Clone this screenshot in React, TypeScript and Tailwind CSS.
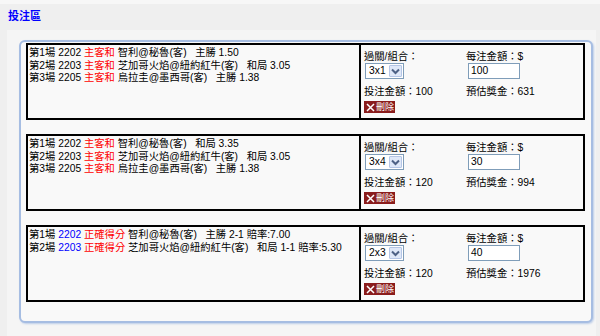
import React from 'react';

interface Line {
  no: string;
  code: string;
  codeBlue?: boolean;
  kind: string;
  match: string;
  pick: string;
}

interface Ticket {
  lines: Line[];
  combo: string;
  stake: string;
  total: string;
  payout: string;
}

const tickets: Ticket[] = [
  {
    lines: [
      { no: '第1場', code: '2202', kind: '主客和', match: '智利@秘魯(客)', pick: '主勝 1.50' },
      { no: '第2場', code: '2203', kind: '主客和', match: '芝加哥火焰@紐約紅牛(客)', pick: '和局 3.05' },
      { no: '第3場', code: '2205', kind: '主客和', match: '烏拉圭@墨西哥(客)', pick: '主勝 1.38' },
    ],
    combo: '3x1',
    stake: '100',
    total: '100',
    payout: '631',
  },
  {
    lines: [
      { no: '第1場', code: '2202', kind: '主客和', match: '智利@秘魯(客)', pick: '和局 3.35' },
      { no: '第2場', code: '2203', kind: '主客和', match: '芝加哥火焰@紐約紅牛(客)', pick: '和局 3.05' },
      { no: '第3場', code: '2205', kind: '主客和', match: '烏拉圭@墨西哥(客)', pick: '主勝 1.38' },
    ],
    combo: '3x4',
    stake: '30',
    total: '120',
    payout: '994',
  },
  {
    lines: [
      { no: '第1場', code: '2202', codeBlue: true, kind: '正確得分', match: '智利@秘魯(客)', pick: '主勝 2-1 賠率:7.00' },
      { no: '第2場', code: '2203', codeBlue: true, kind: '正確得分', match: '芝加哥火焰@紐約紅牛(客)', pick: '和局 1-1 賠率:5.30' },
    ],
    combo: '2x3',
    stake: '40',
    total: '120',
    payout: '1976',
  },
];

const FakeSelect = ({ value }: { value: string }) => (
  <div className="ml-[1px] flex h-[16px] w-[39px] border border-[#7f9db9] bg-white">
    <span className="flex-1 pl-[3px] leading-[14px]">{value}</span>
    <span className="m-[1px] flex w-[13px] items-center justify-center rounded-[1px] border border-[#b5c6e6] bg-[#dfe8f8]">
      <svg width="9" height="7" viewBox="0 0 9 7">
        <path d="M1 1.5 L4.5 5 L8 1.5" fill="none" stroke="#4d6185" strokeWidth="2" />
      </svg>
    </span>
  </div>
);

const DeleteButton = () => (
  <span className="flex h-[12px] w-[31px] items-center whitespace-nowrap bg-[#8a1c1c] pl-[2px] text-[9px] leading-[12px] text-white">
    <svg width="9" height="9" viewBox="0 0 9 9" className="mr-[1px] shrink-0">
      <path d="M1 1 L8 8 M8 1 L1 8" stroke="#fff" strokeWidth="1.5" />
    </svg>
    刪除
  </span>
);

const TicketBox = ({ t }: { t: Ticket }) => (
  <div className="flex h-[77px] border-2 border-black">
    <div className="w-[331px] pl-[1px] pt-[2px] leading-[12.5px]">
      {t.lines.map((l, i) => (
        <div key={i} className="whitespace-pre">
          {l.no} <span className={l.codeBlue ? 'text-[#0000ff]' : ''}>{l.code}</span>{' '}
          <span className="text-[#ff0000]">{l.kind}</span> {l.match}
          {'   '}
          {l.pick}
        </div>
      ))}
    </div>
    <div className="flex-1 border-l-2 border-black pl-[3px] pt-[5px]">
      <div className="grid grid-cols-[102px_1fr]">
        <div className="h-[13px] leading-[13px]">過關/組合：</div>
        <div className="h-[13px] leading-[13px]">每注金額：$</div>
        <FakeSelect value={t.combo} />
        <div className="ml-[2px] h-[16px] w-[52px] border border-[#7f9db9] bg-white pl-[2px] leading-[14px]">
          {t.stake}
        </div>
        <div className="mt-[7px] leading-[12px]">投注金額：{t.total}</div>
        <div className="mt-[7px] leading-[12px]">預估獎金：{t.payout}</div>
      </div>
      <div className="mt-[3px]">
        <DeleteButton />
      </div>
    </div>
  </div>
);

export default function App() {
  return (
    <div className="h-[336px] w-[600px] overflow-hidden bg-[#efefef] font-['Liberation_Sans','Noto_Sans_CJK_TC',sans-serif] text-[10.3px] text-black">
      <div className="h-[4px] bg-[#f7f7f7]" />
      <div className="h-[26px] pl-[8px] pt-[6px] text-[11px] font-bold leading-[12px] text-[#0000ff]">投注區</div>
      <div className="ml-[7px] mr-[4px] bg-[#f5f5f5] pb-[13px] pl-[12px] pr-[3px] pt-[10px]">
        <div className="flex flex-col gap-[14px] rounded-[6px] border-2 border-[#a6bde2] bg-[#f9f9f9] pb-[19px] pl-[5px] pr-[6px] pt-[1px] shadow-[1px_1px_2px_#bccde8]">
          {tickets.map((t, i) => (
            <TicketBox key={i} t={t} />
          ))}
        </div>
      </div>
    </div>
  );
}
